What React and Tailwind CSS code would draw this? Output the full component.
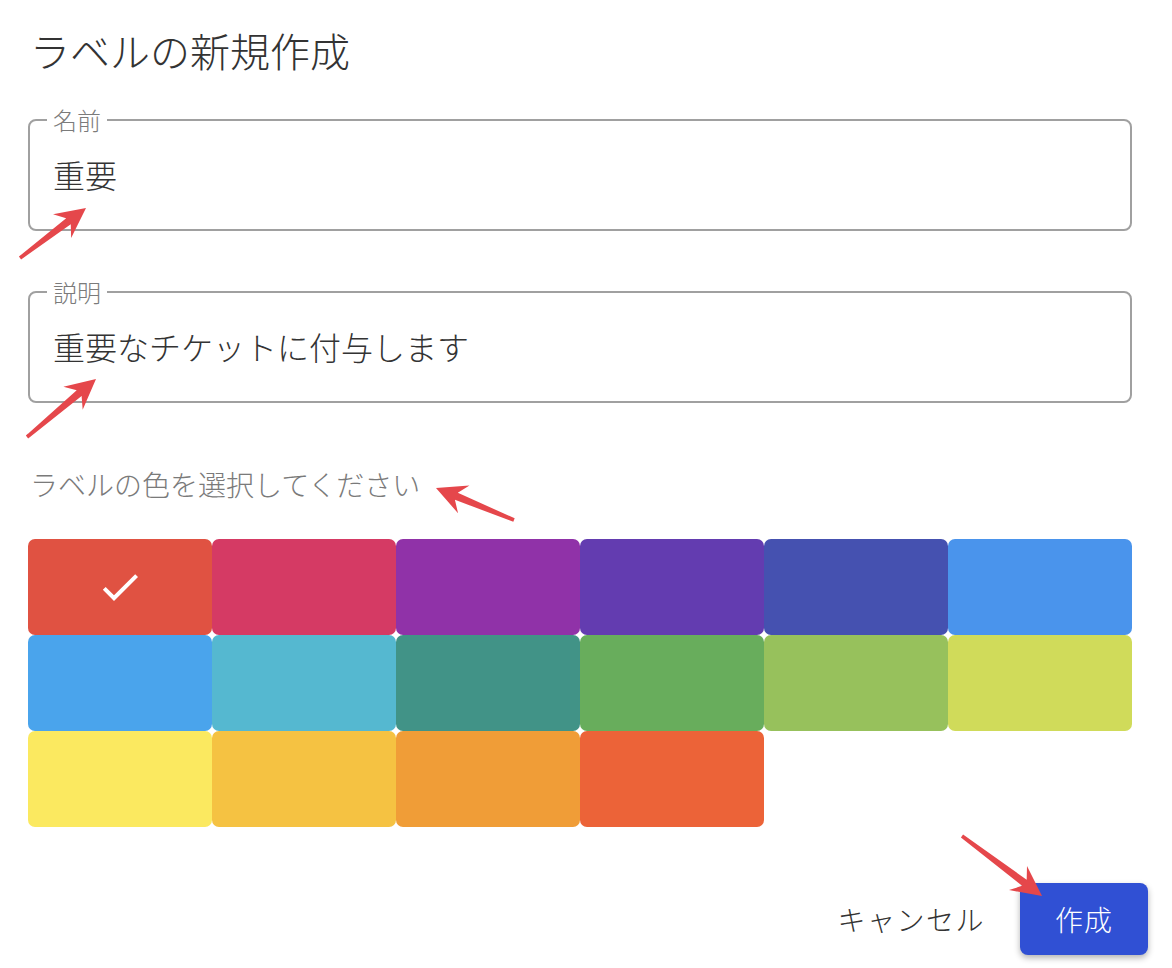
import React from "react";

const swatches = [
  "#e05242", "#d53a64", "#9032a8", "#633cb0", "#4551b0", "#4a94ec",
  "#4aa4ec", "#55b8d0", "#419387", "#68ad5c", "#97c15c", "#d0db5a",
  "#fbe960", "#f5c242", "#f09d37", "#ec6338",
];

// red annotation arrows: [tailX, tailY, tipX, tipY]
const arrows = [
  [20, 258, 86, 208],
  [27, 437, 96, 379],
  [514, 520, 436, 488],
  [962, 836, 1042, 896],
];

const arrowPoints = ([x1, y1, x2, y2]) => {
  const dx = x2 - x1;
  const dy = y2 - y1;
  const len = Math.hypot(dx, dy);
  const ux = dx / len;
  const uy = dy / len;
  const nx = -uy;
  const ny = ux;
  const H = 30;
  const W = 15;
  const p = (along, side) => [x2 - ux * along + nx * side, y2 - uy * along + ny * side];
  const pts = [
    [x1 + nx * 1.8, y1 + ny * 1.8],
    p(H - 8, 3.8),
    p(H, W),
    [x2, y2],
    p(H, -W),
    p(H - 8, -3.8),
    [x1 - nx * 1.8, y1 - ny * 1.8],
  ];
  return pts.map((q) => q.join(",")).join(" ");
};

const Field = ({ label, value, className }) => {
  return (
    <fieldset
      className={`h-[123px] rounded-[8px] border-2 border-[#a0a0a0] pl-[17px] pr-[20px] ${className}`}
    >
      <legend className="px-[6px] text-[24px] leading-[24px] text-[#7b7b7b]">
        {label}
      </legend>
      <input
        readOnly
        value={value}
        className="mt-[18px] block h-[48px] w-full bg-transparent pl-[6px] text-[32px] font-light text-[#333333] outline-none"
      />
    </fieldset>
  );
};

const App = () => {
  return (
    <div className="relative h-[968px] w-[1172px] overflow-hidden bg-white pl-[28px] pr-[24px] font-['Noto_Sans_CJK_JP','Noto_Sans',sans-serif] font-light">
      <h1 className="mt-[22px] h-[56px] pl-[2px] text-[40px] leading-[56px] font-light text-[#333333]">
        ラベルの新規作成
      </h1>

      <div className="w-[1104px]">
        <Field label="名前" value="重要" className="mt-[30px]" />
        <Field
          label="説明"
          value="重要なチケットに付与します"
          className="mt-[49px]"
        />
      </div>

      <p className="mt-[61px] pl-[2px] text-[28px] leading-[40px] text-[#7a7a7a]">
        ラベルの色を選択してください
      </p>

      <div className="mt-[35px] grid w-[1104px] grid-cols-6">
        {swatches.map((color, i) => (
          <button
            key={color + i}
            className="flex h-[96px] items-center justify-center rounded-[7px]"
            style={{ backgroundColor: color }}
          >
            {i === 0 && (
              <svg width="48" height="48" viewBox="0 0 24 24" fill="white">
                <path d="M9 16.17L4.83 12l-1.42 1.41L9 19 21 7l-1.41-1.41z" />
              </svg>
            )}
          </button>
        ))}
      </div>

      <div className="mt-[56px] flex items-center justify-end gap-[35px]">
        <button className="text-[28px] leading-[40px] tracking-[1.5px] text-[#333333]">
          キャンセル
        </button>
        <button className="h-[72px] w-[128px] rounded-[8px] bg-[#3050d4] text-[28px] tracking-[1px] text-white shadow-[0_3px_6px_rgba(0,0,0,0.3)]">
          作成
        </button>
      </div>

      <svg
        className="pointer-events-none absolute left-0 top-0"
        width="1172"
        height="968"
      >
        {arrows.map((a, i) => (
          <polygon key={i} points={arrowPoints(a)} fill="#e5474b" />
        ))}
      </svg>
    </div>
  );
};

export default App;
